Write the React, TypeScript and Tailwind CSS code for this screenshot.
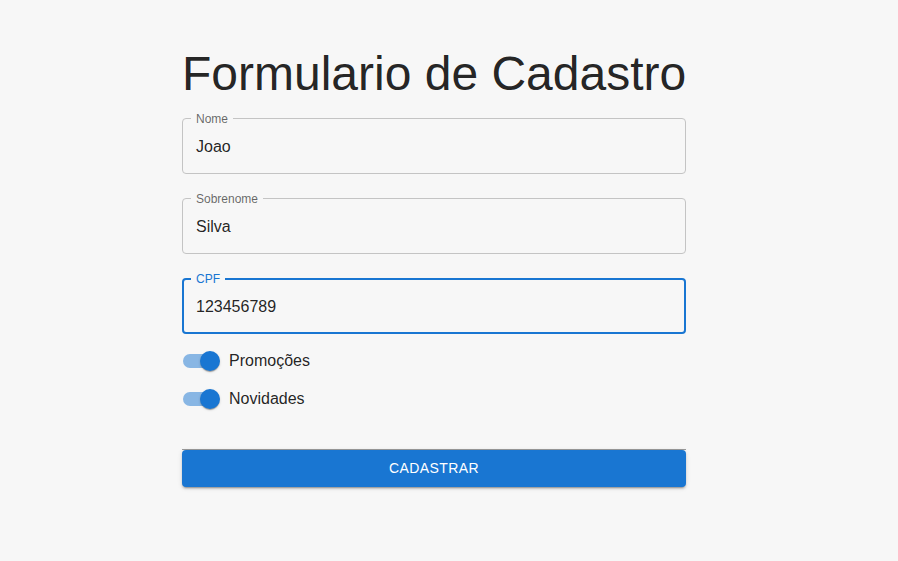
import React from "react";

function Field({ label, value, focused = false }: { label: string; value: string; focused?: boolean }) {
  return (
    <div
      className={`relative mt-4 mb-2 h-[56px] rounded-[4px] ${
        focused ? "border-2 border-[#1976d2]" : "border border-[#c4c4c4]"
      }`}
    >
      <span
        className={`absolute top-0 -translate-y-1/2 bg-[#f7f7f7] px-[5px] text-[12px] leading-[14px] ${
          focused ? "left-[7px] -mt-px text-[#1976d2]" : "left-[8px] text-[rgba(0,0,0,0.6)]"
        }`}
      >
        {label}
      </span>
      <div
        className={`flex h-full items-center pt-[2px] text-[16px] text-[rgba(0,0,0,0.87)] ${
          focused ? "px-[12px]" : "px-[13px]"
        }`}
      >
        {value}
      </div>
    </div>
  );
}

function Toggle({ label }: { label: string }) {
  return (
    <div className="-ml-[11px] flex h-[38px] items-center">
      <div className="relative h-[38px] w-[58px]">
        <div className="absolute left-[12px] top-[12px] h-[14px] w-[34px] rounded-full bg-[#1976d2] opacity-50" />
        <div className="absolute left-[29px] top-[9px] h-[20px] w-[20px] rounded-full bg-[#1976d2] shadow-[0_2px_1px_-1px_rgba(0,0,0,0.2),0_1px_1px_0_rgba(0,0,0,0.14),0_1px_3px_0_rgba(0,0,0,0.12)]" />
      </div>
      <span className="text-[16px] text-[rgba(0,0,0,0.87)]">{label}</span>
    </div>
  );
}

export default function App() {
  return (
    <div className="h-[561px] w-full bg-[#f7f7f7] font-['Liberation_Sans',Arial,sans-serif]">
      <div className="ml-[182px] flex w-[504px] flex-col pt-[46px]">
        <h1 className="whitespace-nowrap text-[48px] font-normal leading-[56px] text-[rgba(0,0,0,0.87)]">
          Formulario de Cadastro
        </h1>
        <Field label="Nome" value="Joao" />
        <Field label="Sobrenome" value="Silva" />
        <Field label="CPF" value="123456789" focused />
        <Toggle label="Promoções" />
        <Toggle label="Novidades" />
        <div className="mt-[31px] h-px bg-[#9a9a9a]" />
        <button className="flex h-[37px] w-full items-center justify-center rounded-[4px] bg-[#1976d2] text-[14px] font-normal uppercase tracking-[0.4px] text-white shadow-[0_3px_1px_-2px_rgba(0,0,0,0.2),0_2px_2px_0_rgba(0,0,0,0.14),0_1px_5px_0_rgba(0,0,0,0.12)]">
          Cadastrar
        </button>
      </div>
    </div>
  );
}
